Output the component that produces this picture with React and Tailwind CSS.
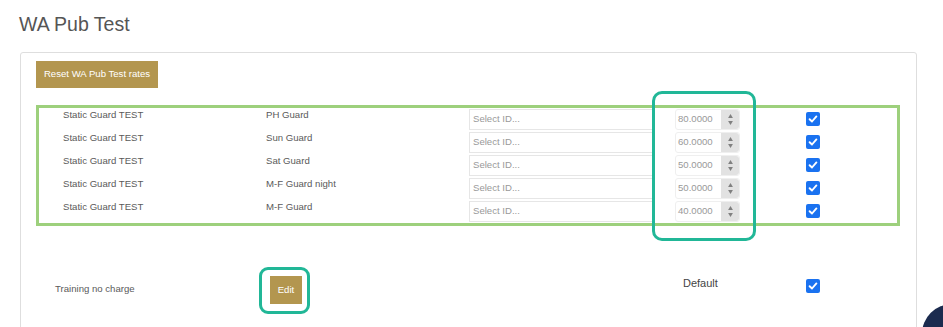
import React from "react";

const rows = [
  ["Static Guard TEST", "PH Guard", "80.0000"],
  ["Static Guard TEST", "Sun Guard", "60.0000"],
  ["Static Guard TEST", "Sat Guard", "50.0000"],
  ["Static Guard TEST", "M-F Guard night", "50.0000"],
  ["Static Guard TEST", "M-F Guard", "40.0000"],
];

function Check() {
  return (
    <span className="flex h-[14px] w-[14px] items-center justify-center rounded-[2px] bg-[#1a72f0]">
      <svg width="10" height="10" viewBox="0 0 10 10">
        <path d="M1.6 5.2 L4 7.5 L8.4 2.4" fill="none" stroke="white" strokeWidth="1.9" strokeLinecap="round" strokeLinejoin="round" />
      </svg>
    </span>
  );
}

function NumInput({ value }) {
  return (
    <div className="flex h-[21px] w-[65px] rounded-[3px] border border-[#efefef] bg-white">
      <div className="flex flex-1 items-center pl-[2px] text-[9.6px] text-[#999]">{value}</div>
      <div className="flex w-[18px] flex-col items-center justify-center gap-[3px] rounded-r-[3px] bg-[#e2e2e2]">
        <svg width="5" height="4" viewBox="0 0 6 5"><path d="M3 0 L6 5 L0 5 Z" fill="#808080" /></svg>
        <svg width="5" height="4" viewBox="0 0 6 5"><path d="M0 0 L6 0 L3 5 Z" fill="#808080" /></svg>
      </div>
    </div>
  );
}

export default function App() {
  return (
    <div
      className="relative h-[327px] w-[943px] overflow-hidden bg-white"
      style={{ fontFamily: '"Liberation Sans", Arial, sans-serif' }}
    >
      <div className="pt-[12px]">
        <h1 className="pl-[19px] text-[19.5px] leading-[24px] text-[#555]">WA Pub Test</h1>
        <div className="ml-[20px] mt-[16px] w-[897px] rounded-[3px] border border-[#dedede] pb-[40px] pl-[15px] pt-[7px]">
          <button className="h-[27px] w-[122px] bg-[#b3964f] text-[9.6px] text-white">
            Reset WA Pub Test rates
          </button>
          <div className="mt-[17px] w-[864px] border-[3px] border-[#9dd07c]">
            {rows.map((r, i) => (
              <div key={i} className="flex h-[23px] items-center pl-[24px]">
                <div className="w-[203px] self-start pt-[1px] text-[9.6px] leading-[12px] text-[#5a5a5a]">{r[0]}</div>
                <div className="w-[203px] self-start pt-[1px] text-[9.6px] leading-[12px] text-[#5a5a5a]">{r[1]}</div>
                <div className="flex h-[21px] w-[186px] items-center border border-[#e6e6e6] border-r-[#f2f2f2] pl-[3px] text-[9.6px] text-[#999]">
                  Select ID...
                </div>
                <div className="w-[20px]" />
                <NumInput value={r[2]} />
                <div className="w-[66px]" />
                <Check />
              </div>
            ))}
          </div>
          <div className="mt-[50px] flex items-start">
            <div className="ml-[19px] mt-[7px] w-[215px] text-[9.6px] leading-[12px] text-[#5a5a5a]">Training no charge</div>
            <div className="relative">
              <button className="h-[28px] w-[32px] bg-[#b3964f] text-[9.6px] text-white">Edit</button>
              <div className="absolute left-[-11px] top-[-9px] h-[47px] w-[51px] rounded-[9px] border-[3px] border-[#21b797]" />
            </div>
            <div className="ml-[381px] mt-[1px] w-[123px] text-[11px] leading-[13px] text-[#444]">Default</div>
            <div className="mt-[3px]">
              <Check />
            </div>
          </div>
        </div>
      </div>
      <div className="absolute left-[652px] top-[91px] h-[150px] w-[104px] rounded-[10px] border-[3px] border-[#21b797]" />
      <div className="absolute left-[922px] top-[304px] h-[60px] w-[60px] rounded-full bg-[#1b2b4f]" />
    </div>
  );
}
